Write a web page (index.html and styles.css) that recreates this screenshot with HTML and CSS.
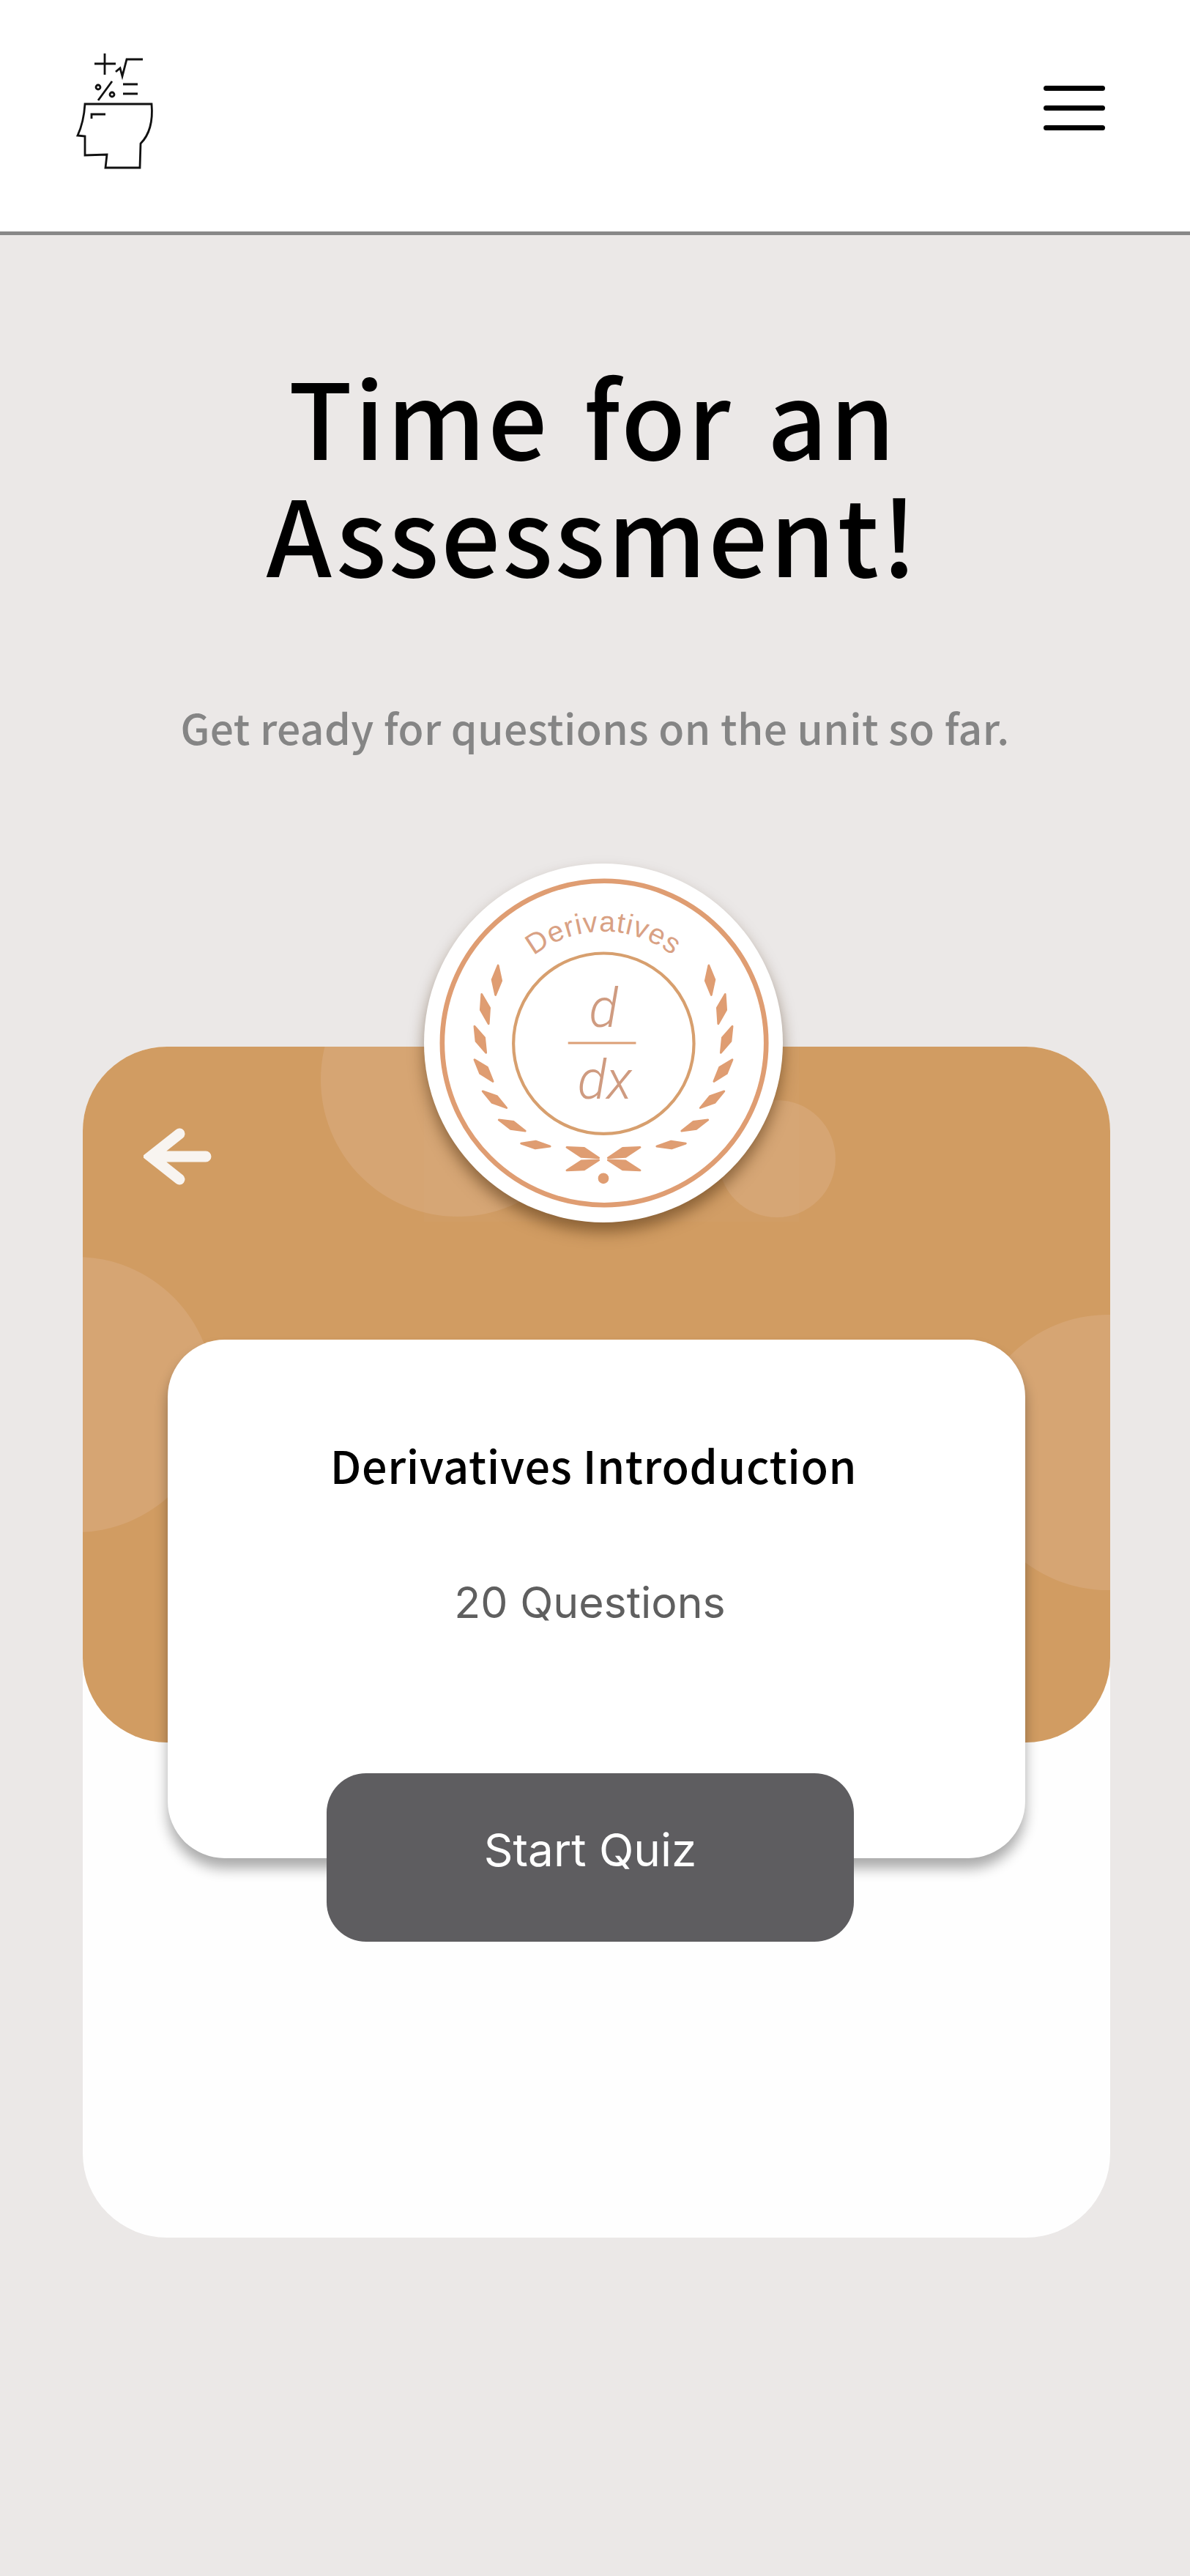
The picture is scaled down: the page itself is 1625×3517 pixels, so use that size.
FILE: index.html
```html
<!DOCTYPE html>
<html lang="en">
<head>
<meta charset="utf-8">
<title>Time for an Assessment!</title>
<link rel="stylesheet" href="styles.css">
</head>
<body>
<header class="topbar">
  <svg class="logo" viewBox="0 0 220 240" width="220" height="240" aria-label="Logo">
    <g fill="none" stroke="#111" stroke-width="2.8">
      <path d="M129 87H158M143 73V102"/>
      <path d="M158 98L164 93L167 104L173 81H195"/>
      <path d="M134 137L153 111"/>
      <circle cx="134" cy="119" r="3"/>
      <circle cx="153" cy="129" r="3"/>
      <path d="M168 115H188M168 128H188"/>
      <path d="M116 142H207C209 165 205 183 192 196L191 229H144L146 211L116 212V186L106 185C112 172 115 158 116 142Z"/>
      <path d="M125 162V156H144"/>
    </g>
  </svg>
  <button class="menu" aria-label="Menu"><span></span><span></span><span></span></button>
</header>
<main class="page">
  <h1 class="title">Time for an<br>Assessment!</h1>
  <p class="subtitle">Get ready for questions on the unit so far.</p>
  <section class="card">
    <div class="band">
      <i class="blob blob-a"></i><i class="blob blob-b"></i><i class="blob blob-c"></i><i class="blob blob-d"></i>
    </div>
    <div class="ghost"></div>
    <svg class="back" viewBox="0 0 100 80" width="100" height="80" aria-label="Back">
      <path d="M49 9L10 40L49 71M12 40H85" fill="none" stroke="#f8f4f0" stroke-width="15" stroke-linecap="round" stroke-linejoin="miter"/>
    </svg>
    <div class="badge">
      <svg viewBox="83 65 1400 1400" width="490" height="490" aria-label="Derivatives badge">
        <defs>
          <path id="arc" d="M348 765A435 435 0 0 1 1218 765"/>
          <g id="wreath">
            <polygon points="372,462 385,522 362,578 349,518"/>
            <polygon points="308,575 339,628 335,690 304,636"/>
            <polygon points="280,700 319,744 325,803 286,758"/>
            <polygon points="280,830 330,860 352,915 302,884"/>
            <polygon points="312,953 367,972 405,1018 349,998"/>
            <polygon points="375,1065 432,1072 478,1108 420,1100"/>
            <polygon points="462,1157 519,1148 575,1168 517,1176"/>
            <polygon points="640,1172 708,1175 765,1213 696,1209"/>
            <polygon points="640,1262 697,1225 765,1222 708,1259"/>
          </g>
        </defs>
        <circle cx="786" cy="765" r="632" fill="none" stroke="#df9d72" stroke-width="19"/>
        <circle cx="784" cy="767" r="352" fill="none" stroke="#d79f6e" stroke-width="12"/>
        <g fill="#df9d72" stroke="#df9d72" stroke-width="8" stroke-linejoin="round">
          <use href="#wreath"/>
          <use href="#wreath" transform="translate(1566 0) scale(-1 1)"/>
          <circle cx="783" cy="1293" r="17"/>
        </g>
        <path d="M645 765H910" stroke="#dc9f76" stroke-width="8"/>
        <text class="badge-arc"><textPath href="#arc" startOffset="50%" text-anchor="middle">Derivatives</textPath></text>
        <text class="badge-math" x="783" y="703" text-anchor="middle">d</text>
        <text class="badge-math" x="788" y="982" text-anchor="middle">dx</text>
      </svg>
    </div>
    <div class="panel">
      <h2 class="panel-title">Derivatives Introduction</h2>
      <p class="panel-count">20 Questions</p>
      <a class="start" href="#">Start Quiz</a>
    </div>
  </section>
</main>
</body>
</html>
```
FILE: styles.css
```css
* { box-sizing: border-box; }
html, body { margin: 0; min-height: 100%; }
body {
  min-height: 3517px;
  background: #ebe8e7;
  font-family: "Noto Sans CJK KR", "Noto Sans", sans-serif;
}
.topbar {
  height: 321px;
  background: #fff;
  border-bottom: 5px solid #888;
  display: flex;
  justify-content: space-between;
  align-items: flex-start;
}
.logo { display: block; }
.menu {
  margin: 117px 116px 0 0;
  padding: 0;
  width: 84px;
  border: 0;
  background: none;
  display: flex;
  flex-direction: column;
  gap: 20px;
}
.menu span { display: block; height: 7px; border-radius: 4px; background: #000; }
.page { display: flex; flex-direction: column; }
.title {
  margin: 165px 0 0 -6px;
  text-align: center;
  font-size: 143px;
  line-height: 160px;
  font-weight: 500;
  letter-spacing: 3px;
  word-spacing: 12px;
  color: #000;
}
.subtitle {
  margin: 146px 0 0;
  text-align: center;
  font-size: 57px;
  line-height: 80px;
  font-weight: 500;
  color: #858585;
  letter-spacing: 0.4px;
}
.card {
  position: relative;
  margin: 397px 109px 0 113px;
  height: 1626px;
  background: #fefefe;
  border-radius: 115px;
  padding: 400px 116px 0;
}
.band {
  position: absolute;
  inset: 0 0 auto 0;
  height: 950px;
  background: #d19c62;
  border-radius: 115px;
  overflow: hidden;
}
.blob { position: absolute; border-radius: 50%; background: #d6a573; }
.blob-a { left: 325px; top: -142px; width: 374px; height: 374px; }
.blob-b { left: 868px; top: 73px; width: 160px; height: 160px; }
.blob-c { left: -197px; top: 287px; width: 376px; height: 376px; }
.blob-d { left: 1212px; top: 366px; width: 376px; height: 376px; }
.ghost {
  position: absolute;
  left: 466px;
  top: -249px;
  width: 512px;
  height: 488px;
  background: rgba(255, 255, 255, 0.018);
}
.back { position: absolute; left: 83px; top: 110px; }
.badge {
  position: absolute;
  left: 466px;
  top: -250px;
  width: 490px;
  height: 490px;
  border-radius: 50%;
  background: #fff;
  box-shadow: 0 13px 20px rgba(70, 40, 10, 0.5);
  overflow: hidden;
}
.badge svg { display: block; }
.badge-arc {
  font-family: "Liberation Sans", sans-serif;
  font-size: 112px;
  letter-spacing: 3px;
  fill: #d9a184;
}
.badge-math {
  font-family: Roboto, "Liberation Sans", sans-serif;
  font-style: italic;
  font-weight: 300;
  font-size: 210px;
  fill: #cf9b80;
}
.panel {
  position: relative;
  height: 708px;
  background: #fff;
  border-radius: 78px;
  box-shadow: 0 14px 18px rgba(0, 0, 0, 0.33);
  display: flex;
  flex-direction: column;
  align-items: center;
}
.panel-title {
  margin: 126px 8px 0 0;
  font-size: 61px;
  line-height: 90px;
  font-weight: 500;
  letter-spacing: 0.6px;
  color: #000;
}
.panel-count {
  margin: 108px 18px 0 0;
  font-family: Inter, "Noto Sans", sans-serif;
  font-size: 59px;
  line-height: 70px;
  color: #5f5f5f;
}
.start {
  margin: 198px 17px 0 0;
  width: 720px;
  height: 230px;
  flex: none;
  padding-top: 65px;
  background: #5e5d60;
  border-radius: 54px;
  font-family: Inter, "Noto Sans", sans-serif;
  font-size: 62px;
  line-height: 80px;
  text-align: center;
  text-decoration: none;
  color: #fff;
}
```
